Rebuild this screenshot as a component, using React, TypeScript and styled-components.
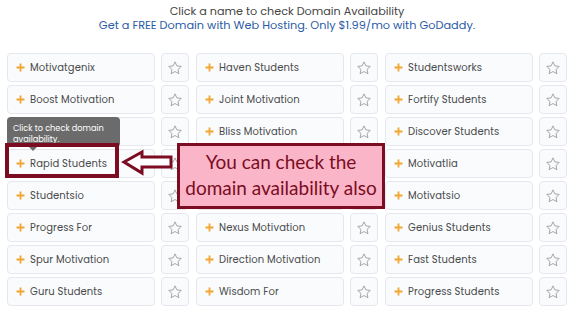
import React from "react";
import styled, { createGlobalStyle } from "styled-components";

const Global = createGlobalStyle`
  html, body { margin: 0; padding: 0; background: #ffffff; }
  body { font-family: "Poppins", "Open Sans", "Noto Sans", sans-serif; }
`;

const Page = styled.div`
  position: relative;
  width: 588px;
  height: 313px;
  overflow: hidden;
  background: #fff;
`;

const Content = styled.div`
  width: 574px;
`;

const Header = styled.div`
  display: flex;
  flex-direction: column;
  align-items: center;
  padding-top: 5px;
  line-height: 13.5px;
`;

const Title = styled.div`
  font-size: 11.2px;
  color: #444;
`;

const Promo = styled.div`
  font-size: 11.3px;
  color: #2c5ba6;
`;

const Grid = styled.div`
  display: grid;
  grid-template-columns: repeat(3, 182px);
  column-gap: 7px;
  row-gap: 3px;
  padding: 21px 0 0 7px;
`;

const Cell = styled.div`
  display: flex;
  gap: 6px;
`;

const NameBox = styled.div`
  flex: 1;
  height: 27px;
  display: flex;
  align-items: center;
  gap: 5px;
  padding-left: 8px;
  background: #f9fbfd;
  border: 1px solid #e4e8ee;
  border-radius: 4px;
  font-size: 10px;
  color: #4a4a4a;
  letter-spacing: 0.1px;
  white-space: nowrap;
`;

const StarBox = styled.div`
  width: 26px;
  height: 27px;
  display: flex;
  align-items: center;
  justify-content: center;
  background: #f9fbfd;
  border: 1px solid #e4e8ee;
  border-radius: 4px;
`;

const Plus = () => (
  <svg width="9" height="9" viewBox="0 0 9 9">
    <path d="M4.5 0.5v8M0.5 4.5h8" stroke="#f2a531" strokeWidth="1.8" />
  </svg>
);

const Star = () => (
  <svg width="16" height="16" viewBox="0 0 24 24" fill="none" stroke="#9a9a9a" strokeWidth="1.3" strokeLinejoin="round">
    <path d="M12 2.8l2.8 6.1 6.6.7-4.9 4.5 1.4 6.5L12 17.3l-5.9 3.3 1.4-6.5-4.9-4.5 6.6-.7z" />
  </svg>
);

const Tooltip = styled.div`
  position: absolute;
  left: 7px;
  top: 117px;
  width: 113px;
  height: 30px;
  box-sizing: border-box;
  padding: 6px 6px 0 6px;
  background: #6b6b6b;
  border-radius: 4px;
  color: #ffffff;
  font-size: 8.2px;
  line-height: 11px;
  &::after {
    content: "";
    position: absolute;
    left: 22px;
    bottom: -4px;
    border-left: 4px solid transparent;
    border-right: 4px solid transparent;
    border-top: 4px solid #6b6b6b;
  }
`;

const Highlight = styled.div`
  position: absolute;
  left: 5px;
  top: 143px;
  width: 114px;
  height: 35px;
  box-sizing: border-box;
  border: 4px solid #7b0c22;
`;

const Arrow = styled.svg`
  position: absolute;
  left: 118px;
  top: 146px;
`;

const Callout = styled.div`
  position: absolute;
  left: 177px;
  top: 143px;
  width: 208px;
  height: 66px;
  box-sizing: border-box;
  border: 3px solid #7b0c22;
  background: #fab5c8;
  display: flex;
  flex-direction: column;
  align-items: center;
  justify-content: center;
  font-family: "Lato", "Open Sans", sans-serif;
  font-size: 19px;
  line-height: 26px;
  color: #7b0c22;
  padding-bottom: 2px;
`;

const columns = [
  ["Motivatgenix", "Boost Motivation", "Motivation Hub", "Rapid Students", "Studentsio", "Progress For", "Spur Motivation", "Guru Students"],
  ["Haven Students", "Joint Motivation", "Bliss Motivation", "Motivation Spark", "Students Rise", "Nexus Motivation", "Direction Motivation", "Wisdom For"],
  ["Studentsworks", "Fortify Students", "Discover Students", "Motivatlia", "Motivatsio", "Genius Students", "Fast Students", "Progress Students"],
];

export default function App() {
  const cells: string[] = [];
  for (let r = 0; r < 8; r++) for (let c = 0; c < 3; c++) cells.push(columns[c][r]);
  return (
    <Page>
      <Global />
      <Content>
        <Header>
          <Title>Click a name to check Domain Availability</Title>
          <Promo>Get a FREE Domain with Web Hosting. Only $1.99/mo with GoDaddy.</Promo>
        </Header>
        <Grid>
          {cells.map((n, i) => (
            <Cell key={i}>
              <NameBox>
                <Plus />
                <span>{n}</span>
              </NameBox>
              <StarBox>
                <Star />
              </StarBox>
            </Cell>
          ))}
        </Grid>
      </Content>
      <Tooltip>Click to check domain availability.</Tooltip>
      <Highlight />
      <Arrow width="62" height="32" viewBox="0 0 62 32">
        <path
          d="M6 16 L24 6 L24 11 L53 11 L53 21 L24 21 L24 27 Z"
          fill="#ffffff"
          stroke="#7b0c22"
          strokeWidth="3"
          strokeLinejoin="miter"
        />
      </Arrow>
      <Callout>
        <div>You can check the</div>
        <div>domain availability also</div>
      </Callout>
    </Page>
  );
}
